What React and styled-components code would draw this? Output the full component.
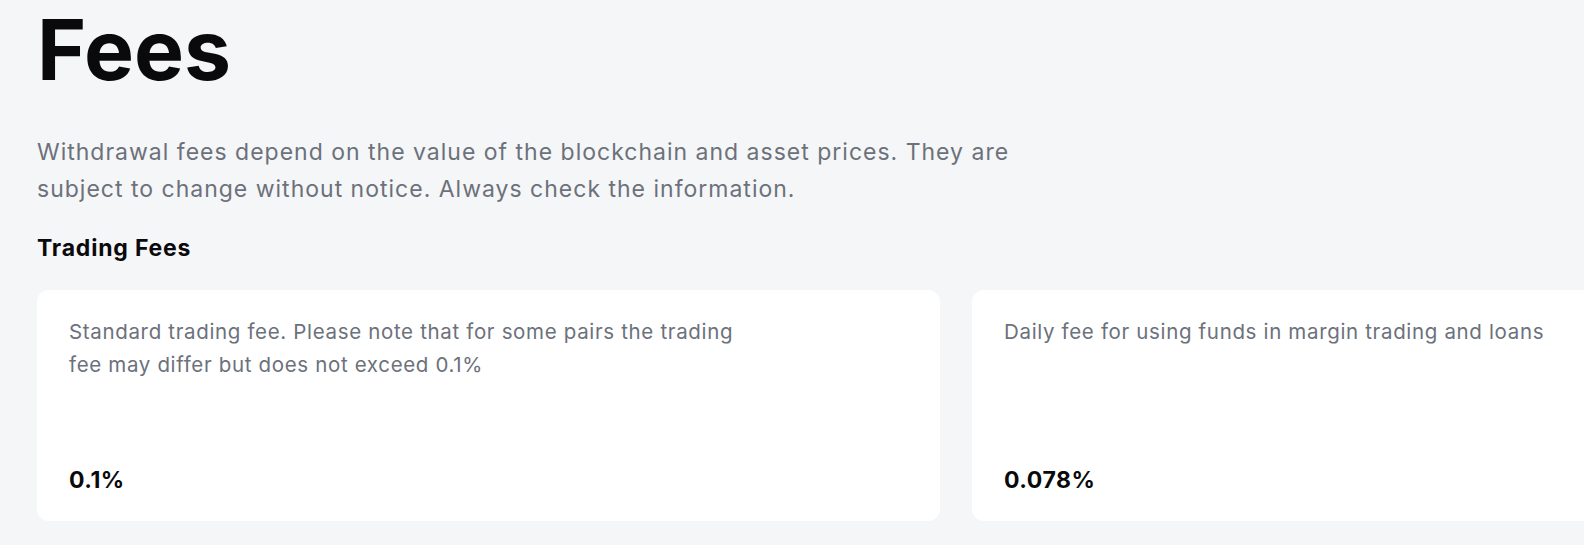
import React from "react";
import styled, { createGlobalStyle } from "styled-components";

const GlobalStyle = createGlobalStyle`
  html, body {
    margin: 0;
    background: #f5f6f8;
    overflow: hidden;
  }
  body {
    font-family: Inter, "Noto Sans", sans-serif;
  }
`;

const Page = styled.main`
  padding: 0 0 0 37px;
  width: 1584px;
  height: 545px;
  box-sizing: border-box;
`;

const Title = styled.h1`
  margin: 0;
  font-size: 84px;
  line-height: 100px;
  font-weight: 700;
  color: #0a0a0c;
`;

const Lead = styled.p`
  margin: 34px 0 0;
  max-width: 1000px;
  font-size: 23px;
  line-height: 37.4px;
  letter-spacing: 1px;
  color: #6c717b;
`;

const SectionTitle = styled.h2`
  margin: 24px 0 0;
  font-size: 23px;
  line-height: 30px;
  font-weight: 700;
  letter-spacing: 0.8px;
  color: #0a0a0c;
`;

const Cards = styled.div`
  display: grid;
  grid-template-columns: 903px 903px;
  gap: 32px;
  margin-top: 27px;
`;

const Card = styled.section`
  display: flex;
  flex-direction: column;
  justify-content: space-between;
  height: 231px;
  box-sizing: border-box;
  padding: 25px 31px 26px 32px;
  background: #ffffff;
  border-radius: 12px;
`;

const CardText = styled.p`
  margin: 0;
  max-width: ${(p) => p.$max || "690px"};
  font-size: 20.5px;
  line-height: 33px;
  letter-spacing: 0.66px;
  color: #6c717b;
`;

const Value = styled.div`
  font-size: 23px;
  line-height: 30px;
  font-weight: 700;
  letter-spacing: 0.5px;
  color: #0a0a0c;
`;

const fees = [
  {
    text: "Standard trading fee. Please note that for some pairs the trading fee may differ but does not exceed 0.1%",
    value: "0.1%",
    max: "690px",
  },
  {
    text: "Daily fee for using funds in margin trading and loans",
    value: "0.078%",
    max: "820px",
  },
];

export default function App() {
  return (
    <>
      <GlobalStyle />
      <Page>
        <Title>Fees</Title>
        <Lead>
          Withdrawal fees depend on the value of the blockchain and asset prices. They are
          subject to change without notice. Always check the information.
        </Lead>
        <SectionTitle>Trading Fees</SectionTitle>
        <Cards>
          {fees.map((f) => (
            <Card key={f.value}>
              <CardText $max={f.max}>{f.text}</CardText>
              <Value>{f.value}</Value>
            </Card>
          ))}
        </Cards>
      </Page>
    </>
  );
}
